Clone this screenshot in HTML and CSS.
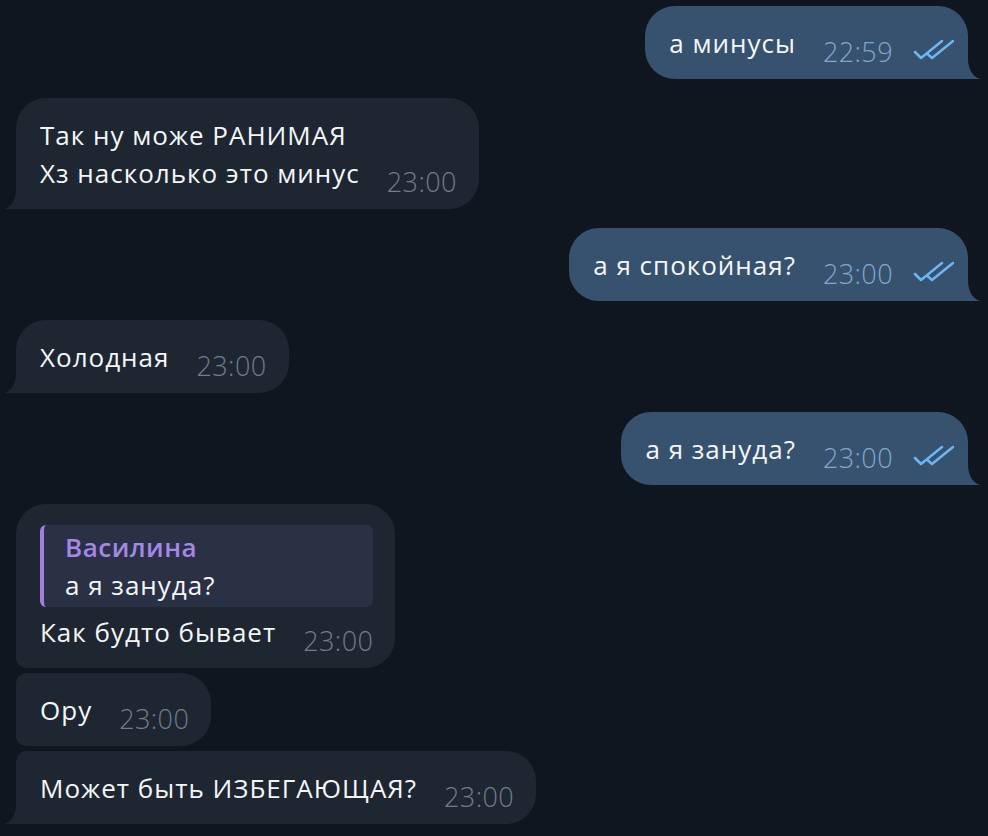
FILE: index.html
```html
<!DOCTYPE html>
<html lang="ru">
    <head>
        <meta charset="UTF-8">
        <meta name="viewport" content="width=device-width, initial-scale=1" />
        <title>Chat</title>
        <link rel="stylesheet" href="styles.css">
    </head>

    <body>
        <div class="chat">
            <div class="group out">
                <div class="bubble tail">
                    <div class="line">
                        <span class="text">а минусы</span>
                        <span class="meta"><span class="time">22:59</span>
                            <svg class="checks" viewBox="0 0 41 22"><path d="M2 13 L8 19 L29 2 M15 15.5 L19 19 L40 2" /></svg>
                        </span>
                    </div>
                </div>
            </div>

            <div class="group in">
                <div class="bubble tail">
                    <div class="line">
                        <span class="text">Так ну може РАНИМАЯ<br>Хз насколько это минус</span>
                        <span class="meta"><span class="time">23:00</span></span>
                    </div>
                </div>
            </div>

            <div class="group out">
                <div class="bubble tail">
                    <div class="line">
                        <span class="text">а я спокойная?</span>
                        <span class="meta"><span class="time">23:00</span>
                            <svg class="checks" viewBox="0 0 41 22"><path d="M2 13 L8 19 L29 2 M15 15.5 L19 19 L40 2" /></svg>
                        </span>
                    </div>
                </div>
            </div>

            <div class="group in">
                <div class="bubble tail">
                    <div class="line">
                        <span class="text">Холодная</span>
                        <span class="meta"><span class="time">23:00</span></span>
                    </div>
                </div>
            </div>

            <div class="group out">
                <div class="bubble tail">
                    <div class="line">
                        <span class="text">а я зануда?</span>
                        <span class="meta"><span class="time">23:00</span>
                            <svg class="checks" viewBox="0 0 41 22"><path d="M2 13 L8 19 L29 2 M15 15.5 L19 19 L40 2" /></svg>
                        </span>
                    </div>
                </div>
            </div>

            <div class="group in">
                <div class="bubble first">
                    <div class="reply">
                        <div class="replyName">Василина</div>
                        <div class="replyText">а я зануда?</div>
                    </div>
                    <div class="line">
                        <span class="text">Как будто бывает</span>
                        <span class="meta"><span class="time">23:00</span></span>
                    </div>
                </div>
                <div class="bubble middle">
                    <div class="line">
                        <span class="text">Ору</span>
                        <span class="meta"><span class="time">23:00</span></span>
                    </div>
                </div>
                <div class="bubble last tail">
                    <div class="line">
                        <span class="text">Может быть ИЗБЕГАЮЩАЯ?</span>
                        <span class="meta"><span class="time">23:00</span></span>
                    </div>
                </div>
            </div>
        </div>
    </body>
</html>
```

FILE: styles.css
```css
body {
    margin: 0;
    background-color: #10161f;
    font-family: "Open Sans", "Noto Sans", sans-serif;
    color: #f4f6f8;
}

.chat {
    display: flex;
    flex-direction: column;
    gap: 19px;
    padding: 6px 20px 10px 16px;
}

.group {
    display: flex;
    flex-direction: column;
    gap: 5px;
}

.group.out {
    align-items: flex-end;
}

.group.in {
    align-items: flex-start;
}

.bubble {
    position: relative;
    display: flex;
    flex-direction: column;
    padding: 18px 22px 17px 24px;
    border-radius: 30px;
    background-color: #1e2631;
}

.out .bubble {
    background-color: #37526f;
    padding-right: 14px;
}

.line {
    display: flex;
    align-items: flex-end;
    gap: 27px;
}

.text {
    font-size: 26px;
    line-height: 38px;
    letter-spacing: 1px;
    white-space: nowrap;
}

.meta {
    display: flex;
    align-items: center;
    gap: 20px;
    margin-bottom: -5px;
}

.time {
    font-size: 27px;
    font-weight: 300;
    line-height: 30px;
    letter-spacing: 0.4px;
    color: #6f7c8a;
}

.out .time {
    color: #81a7cd;
}

.checks {
    width: 41px;
    height: 22px;
    margin-bottom: 4px;
    fill: none;
    stroke: #6db6f4;
    stroke-width: 2.5;
    stroke-linecap: round;
    stroke-linejoin: round;
}

/* tails */
.out .bubble.tail {
    border-bottom-right-radius: 0;
}

.in .bubble.tail {
    border-bottom-left-radius: 0;
}

.bubble.tail::before,
.bubble.tail::after {
    content: '';
    position: absolute;
    bottom: 0;
}

.out .bubble.tail::before {
    right: -14px;
    width: 24px;
    height: 20px;
    background-color: #37526f;
}

.out .bubble.tail::after {
    right: -24px;
    width: 24px;
    height: 22px;
    background-color: #10161f;
    border-bottom-left-radius: 14px 20px;
}

.in .bubble.tail::before {
    left: -13px;
    width: 23px;
    height: 20px;
    background-color: #1e2631;
}

.in .bubble.tail::after {
    left: -24px;
    width: 24px;
    height: 22px;
    background-color: #10161f;
    border-bottom-right-radius: 13px 20px;
}

.bubble.first {
    border-bottom-left-radius: 10px;
    padding-top: 21px;
}

.bubble.middle {
    border-top-left-radius: 10px;
    border-bottom-left-radius: 10px;
}

.bubble.last {
    border-top-left-radius: 10px;
}

/* reply quote */
.reply {
    display: flex;
    flex-direction: column;
    padding: 3px 12px 3px 21px;
    margin-bottom: 6px;
    border-radius: 6px;
    border-left: 4px solid #a27fdf;
    background-color: #2b3145;
}

.replyName {
    font-size: 26px;
    line-height: 38px;
    font-weight: 600;
    letter-spacing: 0.5px;
    color: #a587e6;
}

.replyText {
    font-size: 26px;
    line-height: 38px;
    letter-spacing: 1px;
}
```
